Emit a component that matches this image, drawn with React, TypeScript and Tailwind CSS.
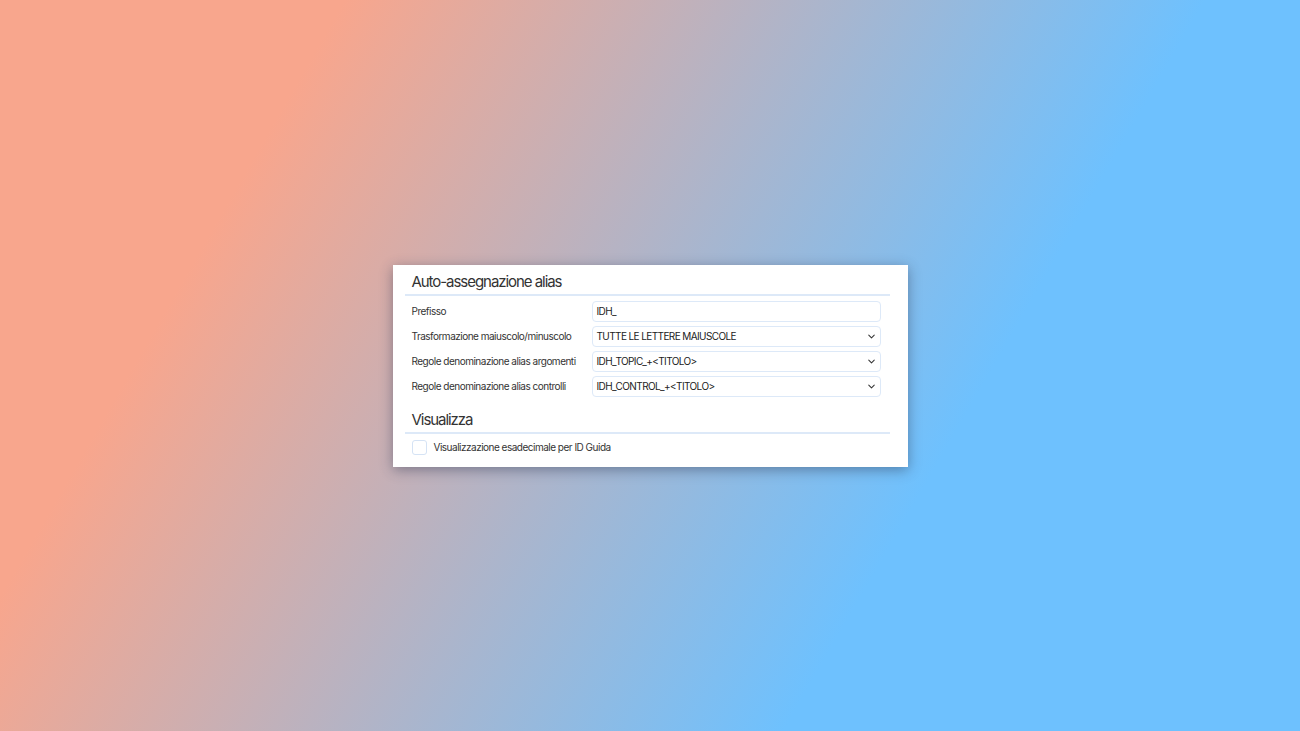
import { ChevronDown } from 'lucide-react'

const rows = [
  { label: 'Prefisso', value: 'IDH_', select: false },
  { label: 'Trasformazione maiuscolo/minuscolo', value: 'TUTTE LE LETTERE MAIUSCOLE', select: true },
  { label: 'Regole denominazione alias argomenti', value: 'IDH_TOPIC_+<TITOLO>', select: true },
  { label: 'Regole denominazione alias controlli', value: 'IDH_CONTROL_+<TITOLO>', select: true },
]

function Field({ value, select }: { value: string; select: boolean }) {
  return (
    <div className="flex h-[21px] w-[289px] items-center justify-between rounded-[4px] border border-[#dde9f8] bg-white pl-[4px] pr-[3px] text-[10px] tracking-[-0.06em] text-[#222]">
      <span>{value}</span>
      {select && <ChevronDown className="h-[11px] w-[11px] text-[#333]" strokeWidth={2.2} />}
    </div>
  )
}

export default function App() {
  return (
    <div
      className="flex h-[731px] w-full items-center justify-center bg-[linear-gradient(120deg,#f8a68d_20%,#6ec1fe_70%)]"
      style={{ fontFamily: 'Inter, "Noto Sans", sans-serif' }}
    >
      <div className="w-[515px] bg-white pb-[12px] pl-3 pr-[18px] pt-[7px] shadow-[0_3px_12px_rgba(40,50,80,0.45)]">
        <div className="border-b-2 border-[#dde9f8] pb-[2px] pl-[7px] text-[15px] leading-[20px] tracking-[-0.07em] text-[#333]">
          Auto-assegnazione alias
        </div>
        <div className="mt-[5px] flex flex-col gap-1 pl-[7px]">
          {rows.map((r) => (
            <div key={r.label} className="flex items-center">
              <div className="w-[180px] text-[10px] tracking-[-0.05em] text-[#333]">{r.label}</div>
              <Field value={r.value} select={r.select} />
            </div>
          ))}
        </div>
        <div className="mt-[13px] border-b-2 border-[#dde9f8] pb-[2px] pl-[7px] text-[15px] leading-[20px] tracking-[-0.07em] text-[#333]">
          Visualizza
        </div>
        <label className="mt-[6px] flex items-center gap-[7px] pl-[7px] text-[10px] tracking-[-0.05em] text-[#333]">
          <span className="h-[15px] w-[15px] rounded-[3px] border border-[#d5e3f5] bg-white" />
          Visualizzazione esadecimale per ID Guida
        </label>
      </div>
    </div>
  )
}
